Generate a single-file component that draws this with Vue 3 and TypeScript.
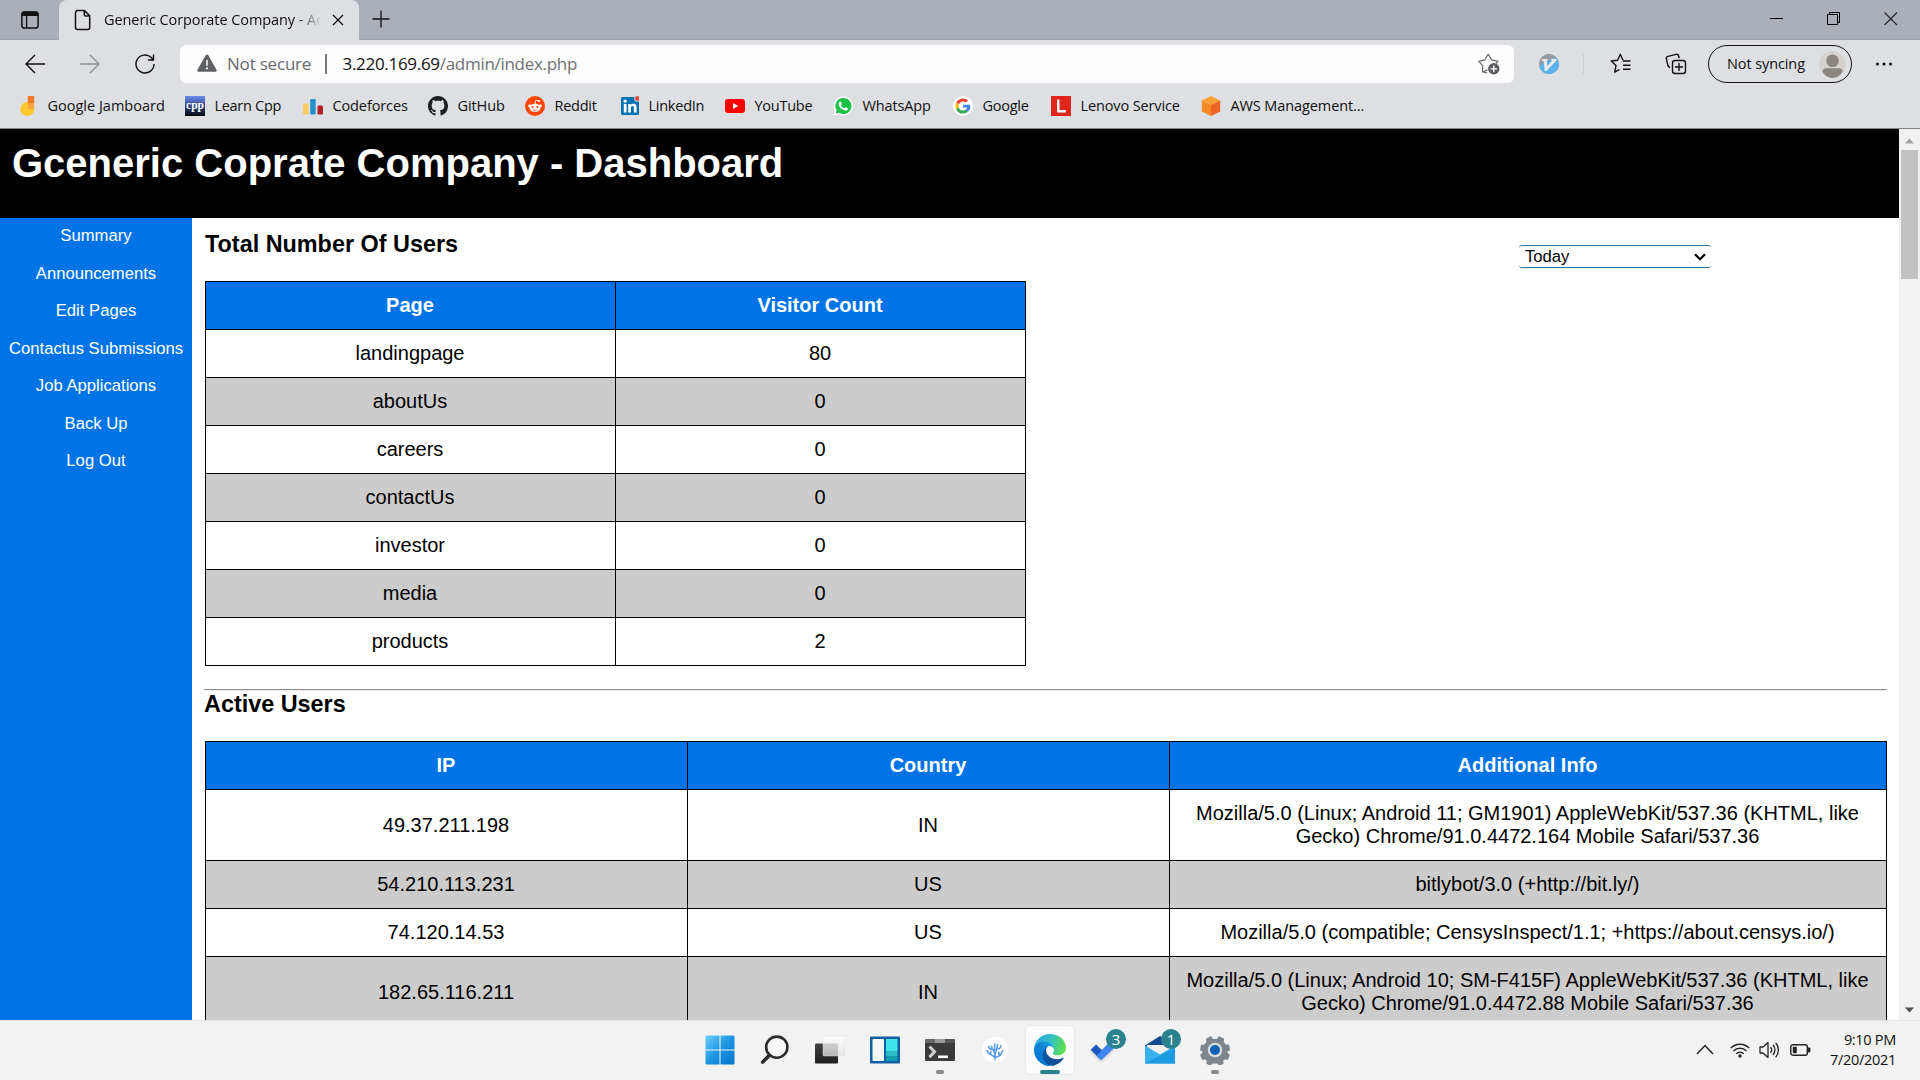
<script setup lang="ts">
interface Bookmark {
  label: string
  icon: string
  width: number
  spacing: number
}

interface Visit {
  page: string
  count: number
}

interface Session {
  ip: string
  country: string
  info: string
}

const bookmarks: Bookmark[] = [
  { label: 'Google Jamboard', icon: 'jamboard', width: 167, spacing: 0 },
  { label: 'Learn Cpp', icon: 'cpp', width: 118, spacing: -0.3 },
  { label: 'Codeforces', icon: 'codeforces', width: 125, spacing: -0.12 },
  { label: 'GitHub', icon: 'github', width: 97, spacing: -0.1 },
  { label: 'Reddit', icon: 'reddit', width: 94, spacing: -0.25 },
  { label: 'LinkedIn', icon: 'linkedin', width: 106, spacing: -0.25 },
  { label: 'YouTube', icon: 'youtube', width: 108, spacing: -0.25 },
  { label: 'WhatsApp', icon: 'whatsapp', width: 120, spacing: -0.15 },
  { label: 'Google', icon: 'google', width: 98, spacing: -0.25 },
  { label: 'Lenovo Service', icon: 'lenovo', width: 150, spacing: -0.13 },
  { label: 'AWS Management...', icon: 'aws', width: 170, spacing: -0.1 },
]

const links: string[] = [
  'Summary',
  'Announcements',
  'Edit Pages',
  'Contactus Submissions',
  'Job Applications',
  'Back Up',
  'Log Out',
]

const visits: Visit[] = [
  { page: 'landingpage', count: 80 },
  { page: 'aboutUs', count: 0 },
  { page: 'careers', count: 0 },
  { page: 'contactUs', count: 0 },
  { page: 'investor', count: 0 },
  { page: 'media', count: 0 },
  { page: 'products', count: 2 },
]

const sessions: Session[] = [
  {
    ip: '49.37.211.198',
    country: 'IN',
    info: 'Mozilla/5.0 (Linux; Android 11; GM1901) AppleWebKit/537.36 (KHTML, like Gecko) Chrome/91.0.4472.164 Mobile Safari/537.36',
  },
  { ip: '54.210.113.231', country: 'US', info: 'bitlybot/3.0 (+http://bit.ly/)' },
  { ip: '74.120.14.53', country: 'US', info: 'Mozilla/5.0 (compatible; CensysInspect/1.1; +https://about.censys.io/)' },
  {
    ip: '182.65.116.211',
    country: 'IN',
    info: 'Mozilla/5.0 (Linux; Android 10; SM-F415F) AppleWebKit/537.36 (KHTML, like Gecko) Chrome/91.0.4472.88 Mobile Safari/537.36',
  },
]
</script>

<template>
  <div class="screen">
    <div class="tabstrip">
      <div class="tab-actions">
        <svg width="20" height="20" viewBox="0 0 20 20">
          <rect x="1.9" y="1.9" width="16.2" height="16.2" rx="2.6" fill="none" stroke="#111" stroke-width="1.5" />
          <path d="M1.5 6V4a2.6 2.6 0 0 1 2.6-2.6h11.8A2.6 2.6 0 0 1 18.5 4v2z" fill="#111" />
          <path d="M6.6 6v12" stroke="#111" stroke-width="1.3" />
        </svg>
      </div>
      <div class="tab">
        <svg class="doc" width="18" height="22" viewBox="0 0 18 22">
          <path d="M3.5 1.6h7l5.200 5.200v11.600a2 2 0 0 1-2 2H3.500a2 2 0 0 1-2-2V3.600a2 2 0 0 1 2-2zM10.300 1.800v4a1.300 1.300 0 0 0 1.300 1.300h4" fill="none" stroke="#111" stroke-width="1.500" stroke-linejoin="round" />
        </svg>
        <span class="tab-title">Generic Corporate Company - Ad</span>
        <svg width="12" height="12" viewBox="0 0 12 12"><path d="M1 1l10 10M11 1L1 11" stroke="#111" stroke-width="1.3" /></svg>
      </div>
      <svg class="plus" width="18" height="18" viewBox="0 0 18 18"><path d="M9 .5v17M.5 9h17" stroke="#111" stroke-width="1.3" /></svg>
      <div class="window-buttons">
        <svg width="14" height="14" viewBox="0 0 14 14"><path d="M0 6.500h13" stroke="#000" /></svg>
        <svg width="14" height="14" viewBox="0 0 14 14"><path d="M.5 2.500h10v10H.5zM2.500 2.500v-2h10v10h-2" fill="none" stroke="#000" /></svg>
        <svg width="14" height="14" viewBox="0 0 14 14"><path d="M.5 .5l12.500 12.500M13 .5L.5 13" stroke="#222" stroke-width="1.100" /></svg>
      </div>
    </div>

    <div class="toolbar">
      <div class="nav-buttons">
        <svg width="20" height="20" viewBox="0 0 20 20"><path d="M10 1L1 10l9 9M1 10h19" fill="none" stroke="#111" stroke-width="1.400" /></svg>
        <svg width="20" height="20" viewBox="0 0 20 20"><path d="M10 1l9 9-9 9M19 10H0" fill="none" stroke="#8f9195" stroke-width="1.400" /></svg>
        <svg width="20" height="20" viewBox="0 0 20 20"><path d="M19 10a9 9 0 1 1-2.700-6.400L18.300 6M18.500.5V6h-5.500" fill="none" stroke="#111" stroke-width="1.400" /></svg>
      </div>
      <div class="address">
        <svg class="warn" width="20" height="18" viewBox="0 0 20 18">
          <path d="M10 .5c.6 0 1 .3 1.300.8l8.200 14.500c.6 1-.1 2-1.200 2H1.700c-1.100 0-1.800-1-1.200-2L8.700 1.300C9 .8 9.400.5 10 .5z" fill="#5f6164" />
          <path d="M10 6v5.700" stroke="#fff" stroke-width="1.500" /><circle cx="10" cy="14.300" r="1.100" fill="#fff" />
        </svg>
        <span class="not-secure">Not secure</span>
        <span class="bar"></span>
        <span class="url"><span class="host">3.220.169.69</span><span class="path">/admin/index.php</span></span>
        <svg class="star" width="22" height="22" viewBox="0 0 22 22">
          <path d="M9.300 20L4.500 18.800l.2-6.100L.8 8.300l6-1.500L10.200 1.200l3.400 5.600 6.300 1.500-1.800 2.200M4.500 19.200l5-2.300" fill="none" stroke="#66686b" stroke-width="1.200" stroke-linejoin="round" />
          <circle cx="15.800" cy="15.800" r="5.700" fill="#5d5f62" /><path d="M15.800 12.500v6.600M12.500 15.800h6.600" stroke="#fff" stroke-width="1.300" />
        </svg>
      </div>
      <div class="tools">
        <svg class="ext" width="20" height="20" viewBox="0 0 20 20">
          <circle cx="10" cy="10" r="10" fill="#989ca3" />
          <path d="M19.800 8A10 10 0 0 1 .3 12.500L4 9l13-6z" fill="#5cb2e8" /><path d="M.1 9h5L17 3 10 0A10 10 0 0 0 .1 9z" fill="#989ca3" />
          <path d="M2.800 5h5.800v1.600l-.8.500.6 5L13 6.800l-.9-.5V5h5.400v1.500L7.500 17H5.800L4.600 7l-1.800-.6z" fill="#e6e9ed" />
        </svg>
        <span class="divider"></span>
        <svg class="fav" width="22" height="22" viewBox="0 0 22 22">
          <path d="M13 7.300L10.300 1.300 7.600 7.200l-6.400.8 4.800 4.500-1.300 6.700 4.800-2.700M13 8h7.500M13 12.300h7.500M13 16.300h7.500" fill="none" stroke="#111" stroke-width="1.400" stroke-linejoin="round" />
        </svg>
        <svg class="coll" width="22" height="22" viewBox="0 0 22 22">
          <rect x="7.500" y="7.500" width="13" height="13" rx="2.500" fill="none" stroke="#111" stroke-width="1.400" />
          <path d="M14 10v8M10 14h8M5 14.500c-1.500-.5-1.900-1.200-2.200-2.200L1.400 6c-.3-1.200.3-2.300 1.500-2.600L11 1.400c1.200-.3 2.300.4 2.600 1.600l.6 2.300" fill="none" stroke="#111" stroke-width="1.400" />
        </svg>
        <div class="profile">
          <span>Not syncing</span>
          <svg width="27" height="27" viewBox="0 0 27 27">
            <circle cx="13.500" cy="13.500" r="13.300" fill="#d5d1cd" />
            <circle cx="13.500" cy="9.800" r="6.300" fill="#8c8682" />
            <path d="M3.500 20.500c0-3 3-3.200 5-3.200h10c2 0 5 .2 5 3.200-2 4-6 6.500-10 6.500s-8-2.500-10-6.500z" fill="#8c8682" />
          </svg>
        </div>
        <svg class="dots" width="18" height="6" viewBox="0 0 18 6"><circle cx="2.500" cy="3" r="1.500" /><circle cx="9" cy="3" r="1.500" /><circle cx="15.500" cy="3" r="1.500" /></svg>
      </div>
    </div>

    <div class="bookmarks">
      <div v-for="b in bookmarks" :key="b.label" class="bookmark" :style="{ width: b.width + 'px' }">
        <svg v-if="b.icon === 'jamboard'" width="20" height="20" viewBox="0 0 20 20">
          <circle cx="9.300" cy="13" r="7" fill="#fbc92f" /><path d="M9.800 6h6.400v7H9.800z" fill="#f9a43a" /><path d="M9.800 0h6.400v7H9.800z" fill="#f47b2a" />
        </svg>
        <svg v-else-if="b.icon === 'cpp'" width="20" height="20" viewBox="0 0 20 20">
          <defs><linearGradient id="cppbg" x1="0" y1="0" x2="0" y2="1"><stop offset="0" stop-color="#6d8cf0" /><stop offset=".5" stop-color="#31437f" /><stop offset="1" stop-color="#05070f" /></linearGradient></defs>
          <rect width="20" height="20" fill="url(#cppbg)" />
          <text x="10" y="12.500" text-anchor="middle" fill="#fff" font-family="Liberation Serif, serif" font-weight="700" font-size="11.500" textLength="18">cpp</text>
        </svg>
        <svg v-else-if="b.icon === 'codeforces'" width="20" height="20" viewBox="0 0 20 20">
          <rect x="0" y="7.500" width="5.500" height="11" rx="1.300" fill="#f8cb5e" /><rect x="7.200" y="3" width="5.500" height="15.500" rx="1.300" fill="#2490c9" /><rect x="14.500" y="9.500" width="5.500" height="9" rx="1.300" fill="#b3202c" />
        </svg>
        <svg v-else-if="b.icon === 'github'" width="20" height="20" viewBox="0 0 16 16">
          <path fill="#1b1f23" d="M8 0C3.580 0 0 3.580 0 8c0 3.540 2.290 6.530 5.470 7.590.4.070.55-.17.55-.38 0-.19-.01-.82-.01-1.490-2.010.37-2.530-.49-2.690-.94-.09-.23-.48-.94-.82-1.130-.28-.15-.68-.52-.01-.53.63-.01 1.080.58 1.230.82.72 1.210 1.870.87 2.330.66.07-.52.28-.87.51-1.070-1.780-.2-3.640-.89-3.640-3.950 0-.87.31-1.590.82-2.150-.08-.2-.36-1.020.08-2.120 0 0 .67-.21 2.200.82.64-.18 1.320-.27 2-.27s1.360.09 2 .27c1.530-1.040 2.200-.82 2.200-.82.44 1.100.16 1.920.08 2.120.51.56.82 1.270.82 2.150 0 3.070-1.870 3.750-3.650 3.950.29.25.54.73.54 1.480 0 1.070-.01 1.930-.01 2.200 0 .21.15.46.55.38A8.010 8.010 0 0 0 16 8c0-4.420-3.580-8-8-8z" />
        </svg>
        <svg v-else-if="b.icon === 'reddit'" width="20" height="20" viewBox="0 0 20 20">
          <circle cx="10" cy="10" r="10" fill="#ff4500" />
          <ellipse cx="10" cy="11.800" rx="5.600" ry="4" fill="#fff" /><circle cx="4.700" cy="9.800" r="1.500" fill="#fff" /><circle cx="15.300" cy="9.800" r="1.500" fill="#fff" />
          <path d="M10 8l.8-3.600 2.800.6" fill="none" stroke="#fff" stroke-width=".9" /><circle cx="14" cy="5" r="1.100" fill="#fff" />
          <circle cx="7.700" cy="11" r="1.100" fill="#ff4500" /><circle cx="12.300" cy="11" r="1.100" fill="#ff4500" /><path d="M7.700 13.600c1.200 1 3.400 1 4.600 0" fill="none" stroke="#ff4500" stroke-width=".7" />
        </svg>
        <svg v-else-if="b.icon === 'linkedin'" width="20" height="20" viewBox="0 0 20 20">
          <rect x="2" y="1" width="18" height="18" rx="1.500" fill="#0a73b1" />
          <circle cx="6.100" cy="5.200" r="1.600" fill="#fff" /><path d="M4.800 8h2.700v8.500H4.800zM9.200 8h2.600v1.200c.5-.9 1.500-1.400 2.700-1.400 2.600 0 3.100 1.700 3.100 3.900v4.800h-2.700v-4.200c0-1 0-2.300-1.400-2.300s-1.600 1.100-1.600 2.200v4.300H9.200z" fill="#fff" />
          <circle cx="18.500" cy="2.500" r="3.200" fill="#dddfe2" /><circle cx="18.500" cy="2.500" r="2.400" fill="#e2483d" />
        </svg>
        <svg v-else-if="b.icon === 'youtube'" width="20" height="20" viewBox="0 0 20 20">
          <rect x="0" y="3" width="20" height="14" rx="3" fill="#f00" /><path d="M8 7l5.200 3L8 13z" fill="#fff" />
        </svg>
        <svg v-else-if="b.icon === 'whatsapp'" width="20" height="20" viewBox="0 0 20 20">
          <path d="M10.300.4a9.500 9.500 0 1 1-4.600 17.800L.3 19.800l1.600-5.200A9.500 9.500 0 0 1 10.300.4z" fill="#fff" />
          <path d="M10.300 2a8 8 0 1 1-4.200 14.700L2.600 17.600l1-3.300A8 8 0 0 1 10.300 2z" fill="#1fc04a" />
          <path d="M7.400 5.600c.5 0 .6.100 1.400 2.300.1.400-.8 1.200-.8 1.500.5 1.100 1.600 2.200 3.300 2.900.4.100 1-1.200 1.400-1.100l2.100 1c.3.200-.1 1.400-.5 1.700-1.300 1.100-3.400.6-5.400-.8-1.700-1.200-3.200-3.100-3.300-4.900 0-1.200.8-2.600 1.800-2.600z" fill="#fff" />
        </svg>
        <svg v-else-if="b.icon === 'google'" width="20" height="20" viewBox="0 0 20 20">
          <circle cx="10" cy="10" r="10" fill="#fff" />
          <g transform="translate(2.400 2.400) scale(.317)">
            <path fill="#EA4335" d="M24 9.500c3.540 0 6.710 1.220 9.210 3.600l6.850-6.850C35.900 2.380 30.470 0 24 0 14.620 0 6.510 5.380 2.560 13.220l7.980 6.190C12.430 13.720 17.740 9.500 24 9.500z" />
            <path fill="#4285F4" d="M46.980 24.550c0-1.570-.15-3.090-.38-4.550H24v9.020h12.940c-.58 2.960-2.260 5.480-4.780 7.180l7.730 6c4.510-4.180 7.090-10.360 7.090-17.650z" />
            <path fill="#FBBC05" d="M10.530 28.590c-.48-1.450-.76-2.990-.76-4.590s.27-3.140.76-4.590l-7.980-6.190C.92 16.460 0 20.120 0 24c0 3.880.92 7.540 2.560 10.780l7.970-6.190z" />
            <path fill="#34A853" d="M24 48c6.480 0 11.930-2.130 15.890-5.810l-7.730-6c-2.150 1.450-4.920 2.300-8.160 2.300-6.260 0-11.570-4.220-13.470-9.910l-7.980 6.190C6.510 42.620 14.620 48 24 48z" />
          </g>
        </svg>
        <svg v-else-if="b.icon === 'lenovo'" width="20" height="20" viewBox="0 0 20 20">
          <rect width="20" height="20" fill="#e1251b" /><path d="M7.300 3.500v11.800h7.500" fill="none" stroke="#fff" stroke-width="2.400" />
        </svg>
        <svg v-else width="20" height="20" viewBox="0 0 20 20">
          <path d="M10 0l9.200 4.500L10 8.800.8 4.500z" fill="#faa134" /><path d="M.8 4.500L10 8.800V20L.8 15.500z" fill="#f58a27" /><path d="M19.200 4.500L10 8.800V20l9.200-4.500z" fill="#ee6423" />
        </svg>
        <span class="bookmark-label" :style="{ letterSpacing: b.spacing + 'px' }">{{ b.label }}</span>
      </div>
    </div>

    <div class="viewport">
      <div class="page">
        <header class="page-header"><h1>Gceneric Coprate Company - Dashboard</h1></header>
        <div class="page-body">
          <nav class="sidebar">
            <a v-for="l in links" :key="l">{{ l }}</a>
          </nav>
          <main>
            <div class="top-row">
              <h3>Total Number Of Users</h3>
              <div class="select">
                <span>Today</span>
                <svg width="12" height="8" viewBox="0 0 12 8"><path d="M1 1.300l5 5 5-5" fill="none" stroke="#000" stroke-width="2.200" /></svg>
              </div>
            </div>
            <table class="visits">
              <thead><tr><th>Page</th><th>Visitor Count</th></tr></thead>
              <tbody>
                <tr v-for="v in visits" :key="v.page"><td>{{ v.page }}</td><td>{{ v.count }}</td></tr>
              </tbody>
            </table>
            <div class="rule"></div>
            <h3 class="active-title">Active Users</h3>
            <table class="sessions">
              <colgroup><col class="c1" /><col class="c2" /><col class="c3" /></colgroup>
              <thead><tr><th>IP</th><th>Country</th><th>Additional Info</th></tr></thead>
              <tbody>
                <tr v-for="s in sessions" :key="s.ip"><td>{{ s.ip }}</td><td>{{ s.country }}</td><td>{{ s.info }}</td></tr>
              </tbody>
            </table>
          </main>
        </div>
      </div>
      <div class="scrollbar">
        <svg width="11" height="6" viewBox="0 0 11 6"><path d="M1 5.500L5.500.5l4.500 5z" fill="#a3a3a3" /></svg>
        <div class="thumb"></div>
        <svg class="down" width="11" height="6" viewBox="0 0 11 6"><path d="M1 .5l4.500 5 4.500-5z" fill="#505050" /></svg>
      </div>
    </div>

    <div class="taskbar">
      <div class="apps">
        <div class="app">
          <svg width="30" height="30" viewBox="0 0 30 30">
            <defs><linearGradient id="win" x1="0" y1="0" x2="30" y2="30" gradientUnits="userSpaceOnUse"><stop offset="0" stop-color="#6fd0fb" /><stop offset=".5" stop-color="#1c96e0" /><stop offset="1" stop-color="#0473d0" /></linearGradient></defs>
            <path d="M1.500.5h13v14h-14v-13a1 1 0 0 1 1-1zM15.500.5h13a1 1 0 0 1 1 1v13h-14zM.5 15.500h14v14h-13a1 1 0 0 1-1-1zM15.500 15.500h14v13a1 1 0 0 1-1 1h-13z" fill="url(#win)" />
          </svg>
        </div>
        <div class="app">
          <svg width="30" height="30" viewBox="0 0 30 30"><circle cx="16.800" cy="12.200" r="10.600" fill="#f7f7f7" stroke="#2b2b2b" stroke-width="2.600" /><path d="M9.200 20.500l-6.500 6.500" stroke="#2b2b2b" stroke-width="3.600" stroke-linecap="round" /></svg>
        </div>
        <div class="app">
          <svg width="30" height="30" viewBox="0 0 30 30">
            <defs>
              <linearGradient id="tv" x1="0" y1="0" x2="0" y2="1"><stop offset="0" stop-color="#444" /><stop offset="1" stop-color="#1c1c1c" /></linearGradient>
              <linearGradient id="tw" x1="0" y1="0" x2="0" y2="1"><stop offset="0" stop-color="#fff" /><stop offset="1" stop-color="#e2e2e2" /></linearGradient>
            </defs>
            <rect x="0" y="8.500" width="23" height="20" rx="1" fill="url(#tv)" /><rect x="8" y="1" width="22" height="20" rx="1" fill="url(#tw)" fill-opacity=".78" stroke="#ddd" stroke-width=".5" />
          </svg>
        </div>
        <div class="app">
          <svg width="30" height="30" viewBox="0 0 30 30">
            <rect x="0" y="1.500" width="30" height="27" rx="1" fill="#125ea3" /><rect x="2.500" y="4" width="11.500" height="22" rx="1" fill="#f4f6f8" />
            <rect x="16" y="4" width="11.500" height="12" fill="#41e3ea" /><rect x="16" y="16" width="11.500" height="5" fill="#2cbcc8" /><rect x="16" y="21" width="11.500" height="5" fill="#119aac" />
          </svg>
        </div>
        <div class="app">
          <svg width="30" height="30" viewBox="0 0 30 30">
            <rect x="0" y="4" width="30" height="22" rx="1.500" fill="#3a3a3b" /><path d="M1.500 4h8.500v4H0V5.500A1.500 1.500 0 0 1 1.500 4z" fill="#666" /><path d="M10 4h10v4H10z" fill="#999" /><path d="M20 4h8.500A1.500 1.500 0 0 1 30 5.500V8H20z" fill="#555" />
            <path d="M4.500 11.500l5 5.300-5 5.300" fill="none" stroke="#d2d2d2" stroke-width="3" /><rect x="13" y="20.500" width="10" height="2.600" fill="#fff" />
          </svg>
          <span class="mark"></span>
        </div>
        <div class="app">
          <svg width="28" height="28" viewBox="0 0 28 28">
            <circle cx="14" cy="14" r="13" fill="#fff" />
            <g fill="none" stroke="#5a9be6" stroke-width="1.600" stroke-linecap="round" stroke-linejoin="round"><path d="M14 23.500V18M14 21.500c-2-3-5-2-6.500-4.500M14 21.500c3-1 5.500-1 6.500-4.500M13.800 18c-.8-4-2.800-4.500-3.300-8M14.200 18c.3-4 2.300-5 2.300-9.500M11.500 13.500c-2 0-3.500-1-4-3M16.300 13c2 0 3.500-1 3.700-3.500M7.500 17L6 14.500M9.500 18.700l.3-3M20.500 17l1.300-2.500M18.300 19.800l-.5-3.500M13.500 14l.3-6" /></g>
          </svg>
        </div>
        <div class="app active">
          <svg width="32" height="32" viewBox="0 0 256 256">
            <defs>
              <linearGradient id="e1" x1="63" y1="177" x2="241" y2="177" gradientUnits="userSpaceOnUse"><stop offset="0" stop-color="#0c59a4" /><stop offset="1" stop-color="#114a8b" /></linearGradient>
              <linearGradient id="e2" x1="157" y1="100" x2="46" y2="221" gradientUnits="userSpaceOnUse"><stop offset="0" stop-color="#1b9de2" /><stop offset=".4" stop-color="#1384d4" /><stop offset="1" stop-color="#0078d4" /></linearGradient>
              <linearGradient id="e3" x1="20" y1="60" x2="245" y2="110" gradientUnits="userSpaceOnUse"><stop offset="0" stop-color="#2ba9e4" /><stop offset=".5" stop-color="#35c1c0" /><stop offset="1" stop-color="#62df4e" /></linearGradient>
            </defs>
            <path fill="url(#e1)" d="M231 190.500c-3.400 1.800-6.900 3.400-10.500 4.700a101.900 101.900 0 0 1-35.900 6.400c-47.300 0-88.500-32.500-88.500-74.300a31.500 31.500 0 0 1 16.400-27.300c-42.800 1.800-53.800 46.400-53.800 72.500 0 74 68.100 81.400 82.800 81.400 7.900 0 19.800-2.300 27-4.600l1.300-.4a128.300 128.300 0 0 0 66.600-52.800 4 4 0 0 0-5.400-5.600z" />
            <path fill="url(#e2)" d="M105.700 241.400a79.200 79.200 0 0 1-22.700-21.300 80.700 80.700 0 0 1 29.500-120c3.200-1.500 8.500-4.100 15.600-4a32.400 32.400 0 0 1 25.700 13 31.900 31.900 0 0 1 6.300 18.700c0-.2 24.500-79.600-80-79.600-43.900 0-80 41.700-80 78.200a130.200 130.200 0 0 0 12.100 56 128 128 0 0 0 156.400 67 75.500 75.500 0 0 1-62.800-8z" />
            <path fill="url(#e3)" d="M152.300 148.900c-.9 1-3.400 2.500-3.400 5.600 0 2.600 1.700 5.200 4.800 7.300 14.300 10 41.400 8.600 41.500 8.600a59.600 59.600 0 0 0 30.300-8.300 61.400 61.400 0 0 0 30.400-52.900c.3-22.400-8-37.300-11.300-43.900C223.500 23.900 177.700 0 128 0A128 128 0 0 0 0 126.200c.5-36.500 36.800-66 80-66 3.500 0 23.500.3 42 10.100a72.600 72.600 0 0 1 30.900 29.300c6.100 10.600 7.200 24.100 7.200 29.500s-2.700 13.300-7.800 19.900z" />
          </svg>
          <span class="mark wide"></span>
        </div>
        <div class="app">
          <svg class="todo" width="30" height="30" viewBox="0 0 30 30">
            <path d="M.7 14.800l5.400-5.300 7.600 7.500-5.300 5.600z" fill="#1f57c0" /><path d="M3.700 17.800L14.500 7l5.500 5.500-11 10.500z" fill="none" /><path d="M6.500 20.700L20 6.500l5.500 5L12.300 24.300a2 2 0 0 1-2.500 0z" fill="#3f83f0" />
          </svg>
          <span class="badge">3</span>
        </div>
        <div class="app">
          <svg width="30" height="30" viewBox="0 0 30 30">
            <path d="M0 10.500L15 1l15 9.500V15H0z" fill="#134a92" /><path d="M2 10h26v10H2z" fill="#f1f1f1" />
            <path d="M0 10.500l15 9 15-9v18H0z" fill="#38b2ee" /><path d="M0 28.500l30-16v16z" fill="#1d9be2" />
          </svg>
          <span class="badge">1</span>
        </div>
        <div class="app">
          <svg width="30" height="30" viewBox="0 0 30 30">
            <path d="M10.500 1.200h.7l1.700 2.800h4.200l1.700-2.800h.7l4.700 2.500-.5 3.200 2 2.600 3.400.3 1 5.200-2.600 1.500.1 1.200 2.300 2.200-2 4.800-3.100-.2-1.700 1.500.6 2.800-4.400 2-1.900-2.400h-4.800l-1.900 2.400-4.400-2 .6-2.800-1.700-1.500-3.100.2-2-4.800 2.300-2.200.1-1.200L0 15l1-5.200 3.400-.3 2-2.600-.5-3.200z" fill="#7e858b" />
            <circle cx="15" cy="15" r="7.300" fill="#d8dcdf" /><circle cx="15" cy="15" r="5" fill="#0c62b4" />
          </svg>
          <span class="mark"></span>
        </div>
      </div>
      <div class="tray">
        <svg class="up" width="18" height="11" viewBox="0 0 18 11"><path d="M1 10l8-8.500 8 8.500" fill="none" stroke="#222" stroke-width="1.500" /></svg>
        <svg width="20" height="16" viewBox="0 0 20 16"><path d="M.8 6a13 13 0 0 1 18.400 0M3.500 9a9.200 9.200 0 0 1 13 0M6.200 11.800a5.500 5.500 0 0 1 7.600 0" fill="none" stroke="#222" stroke-width="1.400" /><circle cx="10" cy="14" r="1.700" fill="#222" /></svg>
        <svg width="21" height="18" viewBox="0 0 21 18"><path d="M1 6h3l5-4.500v15L4 12H1zM11.500 6.300a4 4 0 0 1 0 5.400M14 4a7.500 7.500 0 0 1 0 10M16.700 1.800a11 11 0 0 1 0 14.400" fill="none" stroke="#222" stroke-width="1.300" stroke-linejoin="round" /></svg>
        <svg width="21" height="12" viewBox="0 0 21 12"><rect x=".8" y=".8" width="16.500" height="10.400" rx="2" fill="none" stroke="#222" stroke-width="1.400" /><rect x="2.800" y="2.800" width="4" height="6.400" rx=".8" fill="#222" /><path d="M18 3.500h1.200c.8 0 1.200.5 1.200 1.200v2.600c0 .7-.4 1.200-1.200 1.200H18z" fill="#222" /></svg>
        <div class="clock"><span>9:10 PM</span><span>7/20/2021</span></div>
      </div>
    </div>
  </div>
</template>

<style>
body {
  margin: 0;
  overflow: hidden;
}
</style>

<style scoped>
.screen {
  width: 1920px;
  height: 1080px;
  display: flex;
  flex-direction: column;
  overflow: hidden;
  font-family: "Open Sans", "Noto Sans", sans-serif;
  color: #111;
  background: #dddfe2;
}
.screen * {
  box-sizing: border-box;
}
svg {
  display: block;
  flex: none;
}
.tabstrip {
  height: 40px;
  flex: none;
  display: flex;
  background: #abafb7;
  box-shadow: inset 0 -1px 0 #9fa3aa;
}
.tab-actions {
  width: 59px;
  padding: 10px 0 0 20px;
}
.tab {
  width: 300px;
  height: 40px;
  display: flex;
  align-items: center;
  padding: 0 15px;
  border-radius: 8px 8px 0 0;
  background: #dddfe2;
  white-space: nowrap;
}
.doc {
  margin-right: 12px;
}
.tab-title {
  width: 219px;
  margin-right: 9px;
  font-size: 14.5px;
  line-height: 20px;
  letter-spacing: -0.07px;
  padding-bottom: 1px;
  -webkit-mask-image: linear-gradient(90deg, #000 192px, transparent 218px);
  mask-image: linear-gradient(90deg, #000 192px, transparent 218px);
}
.plus {
  margin: 10px 0 0 13px;
}
.window-buttons {
  margin-left: auto;
  padding: 12px 22px 0 0;
  display: flex;
  gap: 43px;
}
.toolbar {
  height: 48px;
  flex: none;
  display: flex;
  align-items: center;
}
.nav-buttons {
  width: 180px;
  padding-left: 25px;
  display: flex;
  gap: 35px;
}
.address {
  width: 1334px;
  height: 38px;
  padding: 0 14px 0 17px;
  display: flex;
  align-items: center;
  border-radius: 6px;
  background: #fdfdfd;
  font-size: 17px;
}
.warn {
  margin-bottom: 2px;
}
.not-secure {
  width: 98px;
  margin-left: 10px;
  padding-bottom: 2px;
  color: #686a6d;
  letter-spacing: -0.2px;
}
.bar {
  width: 1.5px;
  height: 20px;
  background: #77797c;
  margin-right: 16px;
}
.host {
  color: #111;
}
.url {
  padding-bottom: 2px;
  letter-spacing: -0.3px;
}
.path {
  color: #6f7174;
}
.star {
  margin-left: auto;
}
.tools {
  flex: 1;
  display: flex;
  align-items: center;
}
.ext {
  margin-left: 25px;
}
.divider {
  width: 1px;
  height: 20px;
  margin-left: 24px;
  background: #c8cacd;
}
.fav {
  margin-left: 26px;
}
.coll {
  margin-left: 33px;
}
.profile {
  width: 144px;
  height: 38px;
  margin-left: 21px;
  padding: 0 5px 0 18px;
  display: flex;
  align-items: center;
  justify-content: space-between;
  border: 1.5px solid #111;
  border-radius: 19px;
  font-size: 14.5px;
  line-height: 20px;
  letter-spacing: -0.1px;
  white-space: nowrap;
}
.profile span {
  padding-bottom: 1px;
}
.dots {
  margin-left: 23px;
}
.bookmarks {
  height: 41px;
  flex: none;
  display: flex;
  align-items: center;
  padding: 0 0 5px 18px;
  border-bottom: 1px solid #85878a;
}
.bookmark {
  flex: none;
  display: flex;
  align-items: center;
  white-space: nowrap;
}
.bookmark svg {
  margin-right: 9.5px;
}
.bookmark-label {
  font-size: 14.5px;
}
.viewport {
  height: 891px;
  flex: none;
  display: flex;
  overflow: hidden;
}
.page {
  width: 1899px;
  flex: none;
  display: flex;
  flex-direction: column;
  background: #fff;
  color: #000;
  font-family: "Liberation Sans", Arial, sans-serif;
  font-size: 20px;
}
.page-header {
  height: 89px;
  flex: none;
  padding: 11px 12px;
  background: #000;
}
h1 {
  margin: 0;
  font-size: 40px;
  line-height: 46px;
  color: #fff;
}
.page-body {
  flex: none;
  display: flex;
}
.sidebar {
  width: 192px;
  min-height: 802px;
  flex: none;
  background: #0073e6;
}
.sidebar a {
  display: block;
  height: 37.5px;
  line-height: 36.6px;
  font-size: 16.67px;
  text-align: center;
  color: #fff;
}
main {
  width: 1707px;
  padding-left: 13px;
}
h3 {
  margin: 0;
  font-size: 23.4px;
  line-height: 27px;
}
.top-row {
  height: 63px;
  display: flex;
  padding-top: 13px;
}
.select {
  width: 192px;
  height: 23px;
  margin: 14px 188px 0 auto;
  padding: 0 5px 0 6px;
  display: flex;
  align-items: center;
  justify-content: space-between;
  border-top: 1px solid #2a74a8;
  border-bottom: 1px solid #2a74a8;
  border-radius: 3px;
  font-size: 16.67px;
}
table {
  border-collapse: collapse;
  table-layout: fixed;
  text-align: center;
}
.visits {
  width: 821px;
}
.sessions {
  width: 1682px;
}
.c1,
.c2 {
  width: 482px;
}
th,
td {
  height: 48px;
  padding: 12px 13px 12px 12px;
  border: 1px solid #000;
  line-height: 23px;
}
th {
  background: #0073e6;
  color: #fff;
}
tbody tr:nth-child(even) {
  background: #ccc;
}
.rule {
  height: 2px;
  margin: 23px 12px 0 -1px;
  border-top: 1px solid #8d8d8d;
  border-bottom: 1px solid #ececec;
}
.active-title {
  margin: 0 0 23px -1px;
}
.scrollbar {
  width: 21px;
  padding: 9px 0 7px;
  display: flex;
  flex-direction: column;
  align-items: center;
  background: #f1f1f1;
}
.thumb {
  width: 17px;
  height: 129px;
  margin-top: 6px;
  background: #c1c1c1;
}
.down {
  margin-top: auto;
}
.taskbar {
  height: 60px;
  flex: none;
  display: flex;
  background: #f2f2f2;
  box-shadow: inset 0 1px 0 #e6e6e6;
}
.apps {
  display: flex;
  margin-left: 692px;
}
.app {
  position: relative;
  width: 55px;
  height: 60px;
  padding-bottom: 1px;
  display: flex;
  align-items: center;
  justify-content: center;
}
.active {
  width: 48px;
  height: 48px;
  margin: 6px 3px 6px 4px;
  padding: 0;
  border-radius: 5px;
  background: #fcfcfc;
  box-shadow: 0 0 1px 1px #e7e7e7;
}
.mark {
  position: absolute;
  bottom: 6px;
  width: 8px;
  height: 4px;
  border-radius: 2px;
  background: #868686;
}
.wide {
  bottom: 0;
  width: 20px;
  background: #2b818e;
}
.todo {
  filter: drop-shadow(0 2px 1px rgba(0, 0, 0, 0.15));
}
.badge {
  position: absolute;
  left: 29px;
  top: 9px;
  width: 20px;
  height: 20px;
  border-radius: 50%;
  background: #2b818e;
  color: #fff;
  font-size: 15px;
  line-height: 20px;
  text-align: center;
}
.tray {
  margin-left: auto;
  padding: 0 24px 1px 0;
  display: flex;
  align-items: center;
  gap: 9.5px;
}
.up {
  margin-right: 6px;
}
.clock {
  width: 76px;
  display: flex;
  flex-direction: column;
  align-items: flex-end;
  font-size: 14.5px;
  line-height: 20px;
  letter-spacing: -0.3px;
}
</style>
